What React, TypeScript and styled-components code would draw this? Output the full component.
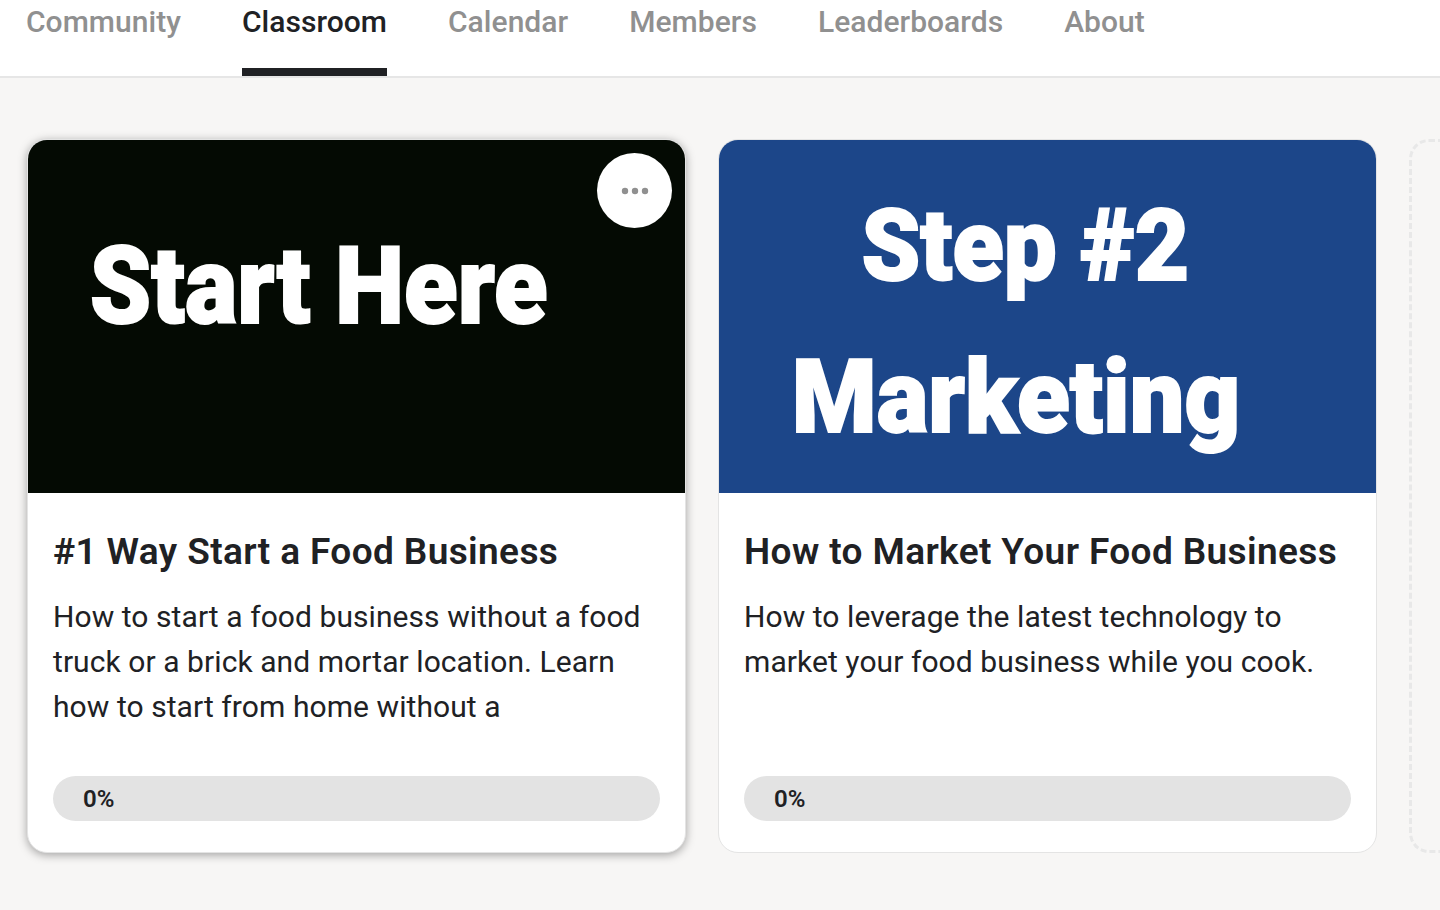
import styled, { createGlobalStyle } from "styled-components";

const GlobalStyle = createGlobalStyle`
  html, body {
    margin: 0;
    height: 100%;
    background-color: #f7f6f5;
    font-family: Roboto, "Liberation Sans", sans-serif;
    overflow: hidden;
  }
`;

const Nav = styled.nav`
  height: 76px;
  box-sizing: content-box;
  background-color: #ffffff;
  border-bottom: 2px solid #e6e6e6;
  display: flex;
  gap: 61px;
  padding-left: 26px;
`;

const Tab = styled.a<{ $active?: boolean }>`
  height: 76px;
  box-sizing: border-box;
  line-height: 44px;
  font-size: 30px;
  font-weight: 500;
  letter-spacing: 0.04px;
  color: ${({ $active }) => ($active ? "#202124" : "#909090")};
  border-bottom: 8px solid ${({ $active }) => ($active ? "#202124" : "transparent")};
`;

const CardRow = styled.main`
  display: flex;
  gap: 32px;
  padding: 61px 0 0 27px;
`;

const Card = styled.article<{ $raised?: boolean }>`
  position: relative;
  flex: 0 0 659px;
  height: 714px;
  box-sizing: border-box;
  background-color: #ffffff;
  border-radius: 20px;
  border: 1px solid #e4e4e4;
  overflow: hidden;
  display: flex;
  flex-direction: column;
  box-shadow: ${({ $raised }) =>
    $raised ? "0 2px 10px rgba(0, 0, 0, 0.35)" : "none"};
`;

const Cover = styled.div<{ $bg: string }>`
  height: 353px;
  flex-shrink: 0;
  background-color: ${({ $bg }) => $bg};
  display: flex;
  flex-direction: column;
  align-items: center;
  color: #ffffff;
  -webkit-text-stroke: 2px #ffffff;
`;

const StartText = styled.div`
  margin: 83px 0 0 -76px;
  font-size: 108px;
  line-height: 126px;
  font-weight: 900;
  white-space: nowrap;
  transform: scaleX(0.91);
`;

const StepText = styled.div`
  margin: 41px 0 0 -44px;
  font-size: 100px;
  line-height: 130px;
  font-weight: 900;
  white-space: nowrap;
  transform: scaleX(0.94);
`;

const MarketingText = styled.div`
  margin: 20px 0 0 -64px;
  font-size: 102px;
  line-height: 132px;
  font-weight: 900;
  white-space: nowrap;
  transform: scaleX(0.95);
`;

const MenuButton = styled.button`
  position: absolute;
  top: 13px;
  right: 13px;
  width: 75px;
  height: 75px;
  padding: 0;
  border: none;
  border-radius: 50%;
  background-color: #ffffff;
  display: flex;
  align-items: center;
  justify-content: center;
`;

const Body = styled.div`
  flex: 1;
  display: flex;
  flex-direction: column;
  padding: 37px 25px 31px 25px;
`;

const Title = styled.h2`
  margin: 0;
  font-size: 37px;
  line-height: 44px;
  font-weight: 600;
  letter-spacing: 0.38px;
  color: #202124;
  white-space: nowrap;
`;

const Description = styled.p`
  margin: 20px 0 0;
  font-size: 30px;
  line-height: 45px;
  font-weight: 400;
  letter-spacing: 0.07px;
  color: #202124;
  height: 135px;
`;

const Progress = styled.div`
  margin-top: auto;
  height: 45px;
  border-radius: 23px;
  background-color: #e3e3e3;
  padding-left: 30px;
  line-height: 46px;
  font-size: 24px;
  font-weight: 600;
  color: #202124;
`;

const Placeholder = styled.div`
  flex: 0 0 659px;
  height: 714px;
  box-sizing: border-box;
  border-radius: 20px;
  border: 3px dashed #e8e8e8;
`;

const DotsIcon = () => (
  <svg width="28" height="8" viewBox="0 0 28 8" fill="#909090">
    <circle cx="4" cy="4" r="3.2" />
    <circle cx="14" cy="4" r="3.2" />
    <circle cx="24" cy="4" r="3.2" />
  </svg>
);

export default function App() {
  return (
    <>
      <GlobalStyle />
      <Nav>
        <Tab>Community</Tab>
        <Tab $active>Classroom</Tab>
        <Tab>Calendar</Tab>
        <Tab>Members</Tab>
        <Tab>Leaderboards</Tab>
        <Tab>About</Tab>
      </Nav>
      <CardRow>
        <Card $raised>
          <Cover $bg="#040a03">
            <StartText>Start Here</StartText>
          </Cover>
          <MenuButton aria-label="More">
            <DotsIcon />
          </MenuButton>
          <Body>
            <Title>#1 Way Start a Food Business</Title>
            <Description>
              How to start a food business without a food truck or a brick and
              mortar location. Learn how to start from home without a
            </Description>
            <Progress>0%</Progress>
          </Body>
        </Card>
        <Card>
          <Cover $bg="#1c4689">
            <StepText>Step #2</StepText>
            <MarketingText>Marketing</MarketingText>
          </Cover>
          <Body>
            <Title>How to Market Your Food Business</Title>
            <Description>
              How to leverage the latest technology to market your food business
              while you cook.
            </Description>
            <Progress>0%</Progress>
          </Body>
        </Card>
        <Placeholder />
      </CardRow>
    </>
  );
}
